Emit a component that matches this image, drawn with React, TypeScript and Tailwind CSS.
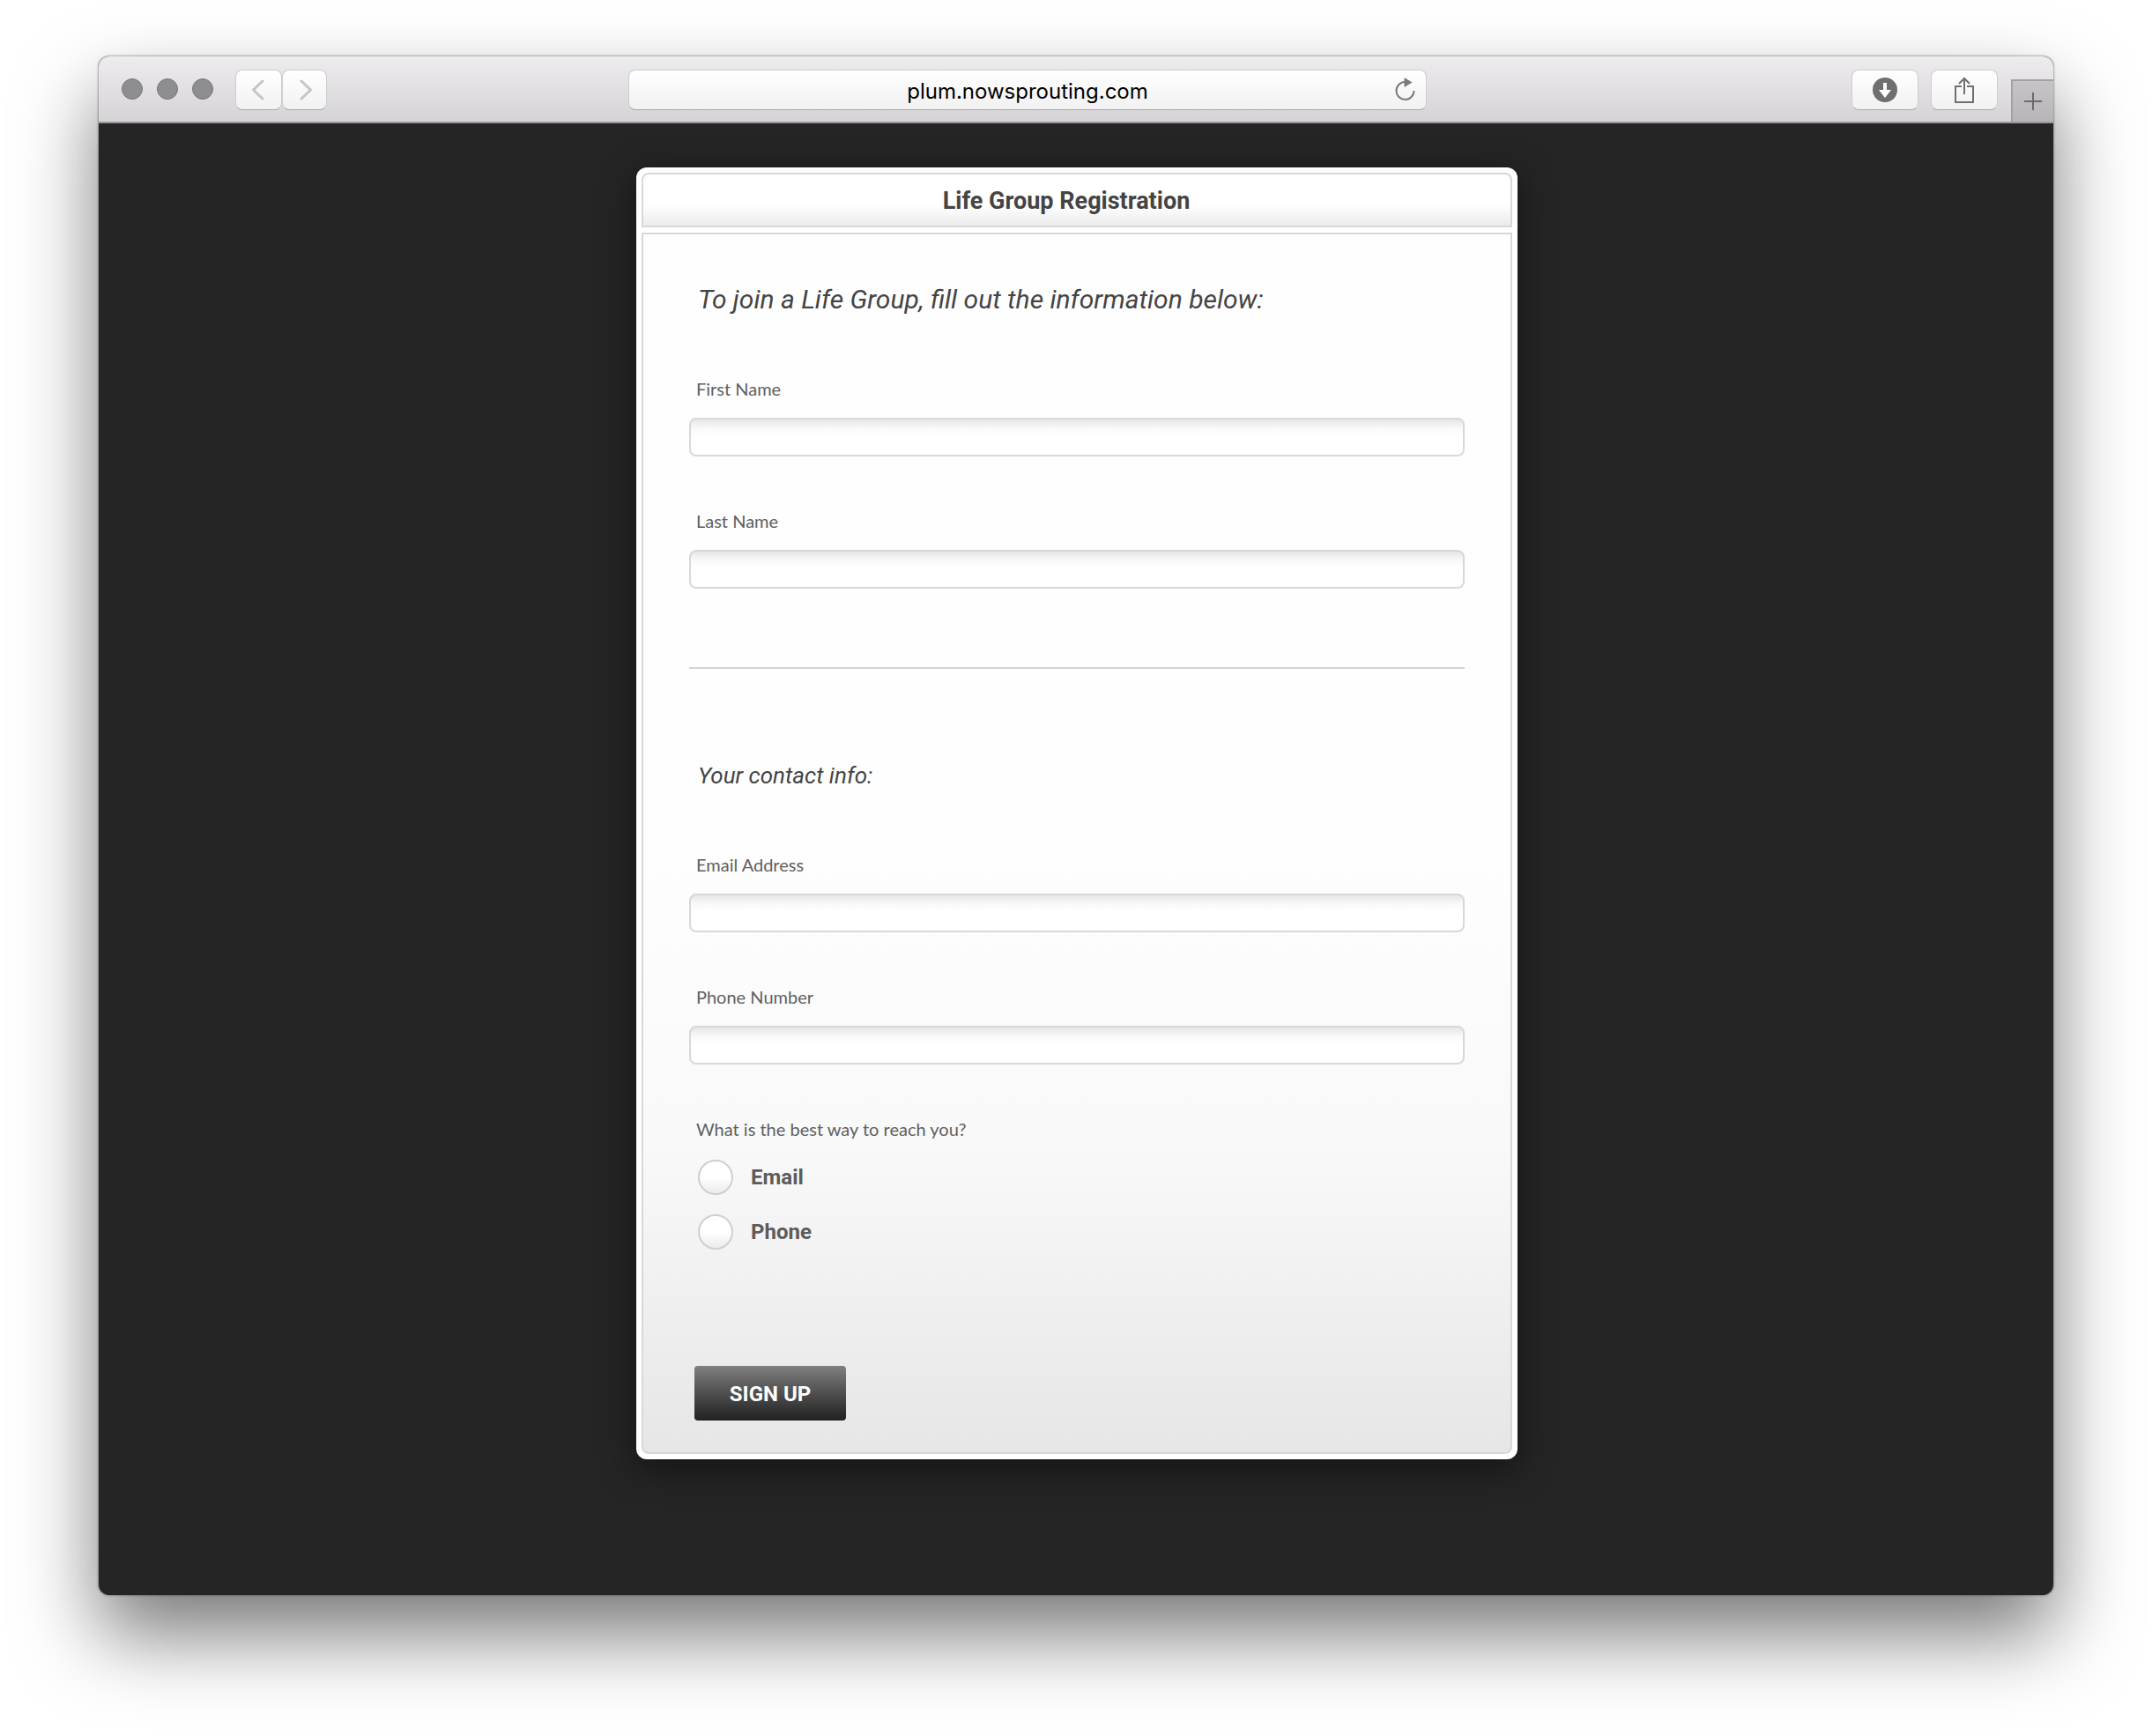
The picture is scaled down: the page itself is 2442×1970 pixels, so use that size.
import React, { useState } from 'react';
import { Plus } from 'lucide-react';

interface TextField {
  id: string;
  label: string;
  type: string;
}

const nameFields: TextField[] = [
  { id: 'first-name', label: 'First Name', type: 'text' },
  { id: 'last-name', label: 'Last Name', type: 'text' },
];

const contactFields: TextField[] = [
  { id: 'email', label: 'Email Address', type: 'email' },
  { id: 'phone', label: 'Phone Number', type: 'tel' },
];

const contactMethods = ['Email', 'Phone'];

const toolbarButton =
  'flex h-[46px] items-center justify-center rounded-lg border border-[#cfcdd0] border-b-[#a9a8aa] bg-gradient-to-b from-white to-[#f1f1f1]';

function Field({ field }: { field: TextField }) {
  return (
    <div className="flex flex-col">
      <label htmlFor={field.id} className="ml-2 h-[50px] font-['Lato',sans-serif] text-[20px] leading-[34px] text-[#606060]">
        {field.label}
      </label>
      <input
        id={field.id}
        type={field.type}
        className="h-[44px] rounded-lg border-2 border-[#d8d8d8] bg-white bg-gradient-to-b from-[#e6e6e6] from-0% via-[#f9f9f9] via-25% to-white to-45% px-3 text-[20px] text-[#444] outline-none"
      />
    </div>
  );
}

function Toolbar() {
  return (
    <header className="grid h-[76px] grid-cols-[601fr_906fr_711fr] border-b-2 border-[#9b999c] bg-gradient-to-b from-[#eeecef] to-[#d5d3d6] pt-[15px]">
      <div className="flex items-start pl-[26px]">
        <div className="flex h-11 items-center gap-4">
          <span className="h-6 w-6 rounded-full border border-[#77757a] bg-[#8e8d91]" />
          <span className="h-6 w-6 rounded-full border border-[#77757a] bg-[#8e8d91]" />
          <span className="h-6 w-6 rounded-full border border-[#77757a] bg-[#8e8d91]" />
        </div>
        <div className="ml-[25px] flex">
          <button type="button" aria-label="Back" className={`${toolbarButton} w-[53px]`}>
            <svg className="h-6 w-4" viewBox="0 0 16 24" fill="none" stroke="#c4c4c4" strokeWidth="3" strokeLinecap="round" strokeLinejoin="round">
              <path d="M12 2 1.500 12 12 22" />
            </svg>
          </button>
          <button type="button" aria-label="Forward" className={`${toolbarButton} w-[51px]`}>
            <svg className="h-6 w-4" viewBox="0 0 16 24" fill="none" stroke="#c4c4c4" strokeWidth="3" strokeLinecap="round" strokeLinejoin="round">
              <path d="m4 2 10.500 10L4 22" />
            </svg>
          </button>
        </div>
      </div>

      <div className={`${toolbarButton} relative`}>
        <input
          type="text"
          aria-label="Address"
          defaultValue="plum.nowsprouting.com"
          className="h-full w-full bg-transparent pt-[2px] text-center font-['Inter',sans-serif] text-[24px] text-black outline-none"
        />
        <button type="button" aria-label="Reload" className="absolute right-3 top-2">
          <svg className="h-7 w-6" viewBox="0 0 24 28" fill="none" stroke="#7a7a7a" strokeWidth="2">
            <path d="M12 5A10 10 0 1 0 22.500 15" />
            <path d="M11.500 0v11l9-5.500z" fill="#7a7a7a" stroke="none" />
          </svg>
        </button>
      </div>

      <div className="flex items-start justify-end">
        <button type="button" aria-label="Downloads" className={`${toolbarButton} w-[76px]`}>
          <svg className="h-7 w-7" viewBox="0 0 28 28">
            <circle cx="14" cy="14" r="14" fill="#6f6f6f" />
            <path d="M12 6h4v8h5l-7 9-7-9h5z" fill="#fff" />
          </svg>
        </button>
        <button type="button" aria-label="Share" className={`${toolbarButton} ml-[14px] w-[76px]`}>
          <svg className="h-8 w-6" viewBox="0 0 24 32" fill="none" stroke="#6f6f6f" strokeWidth="2">
            <path d="M9 12H2v18h20V12h-7" />
            <path d="M12 21V3M6 9l6-6 6 6" />
          </svg>
        </button>
        <button
          type="button"
          aria-label="New tab"
          className="ml-[15px] mt-[11px] flex h-[48px] w-[48px] items-center justify-center border-l-2 border-t-2 border-[#a3a1a4] bg-gradient-to-b from-[#c6c4c7] to-[#b7b5b8]"
        >
          <Plus size={32} strokeWidth={1.5} className="text-[#6b696c]" />
        </button>
      </div>
    </header>
  );
}

export default function App() {
  const [method, setMethod] = useState('');

  return (
    <div className="min-h-screen bg-white px-28 pb-40 pt-16">
      <div className="overflow-hidden rounded-xl bg-[#252525] shadow-[0_0_2px_1px_rgba(0,0,0,0.3),0_45px_90px_rgba(0,0,0,0.53)]">
        <Toolbar />

        <main className="pb-[154px] pl-6 pr-[22px] pt-[50px]">
          <div className="mx-auto flex w-full max-w-[1000px] flex-col gap-[6px] rounded-xl bg-white p-[6px] shadow-[0_10px_40px_rgba(0,0,0,0.5)]">
            <h1 className="h-[62px] rounded-t-lg border-2 border-[#d8d8d8] bg-gradient-to-b from-white from-60% to-[#ebebeb] pr-6 text-center font-['Roboto',sans-serif] text-[27px] font-bold leading-[60px] text-[#444]">
              Life Group Registration
            </h1>

            <form
              onSubmit={(e) => e.preventDefault()}
              className="flex flex-col rounded-b-lg border-2 border-[#d8d8d8] bg-gradient-to-b from-[#fefefe] from-50% via-[#f9f9f9] via-75% to-[#e6e6e6] px-[52px] pb-9 pt-[52px]"
            >
              <p className="ml-[10px] font-['Roboto',sans-serif] text-[30px] italic leading-[44px] text-[#444]">
                To join a Life Group, fill out the information below:
              </p>
              <div className="mt-[62px] flex flex-col gap-14">
                {nameFields.map((field) => (
                  <Field key={field.id} field={field} />
                ))}
              </div>

              <hr className="mt-[89px] border-t-2 border-[#d3d3d3]" />

              <h2 className="ml-[10px] mt-[101px] font-['Roboto',sans-serif] text-[26px] italic leading-[40px] text-[#444]">
                Your contact info:
              </h2>
              <div className="mt-16 flex flex-col gap-14">
                {contactFields.map((field) => (
                  <Field key={field.id} field={field} />
                ))}
              </div>

              <fieldset className="ml-2 mt-14">
                <legend className="h-[52px] font-['Lato',sans-serif] text-[20px] leading-[34px] text-[#606060]">
                  What is the best way to reach you?
                </legend>
                <div className="flex flex-col gap-[22px]">
                  {contactMethods.map((option) => (
                    <label
                      key={option}
                      className="flex h-10 items-center gap-5 font-['Roboto',sans-serif] text-[24px] font-bold text-[#5c5c5c]"
                    >
                      <input
                        type="radio"
                        name="method"
                        checked={method === option}
                        onChange={() => setMethod(option)}
                        className="ml-[2px] h-10 w-10 appearance-none rounded-full border-2 border-[#cfcfcf] bg-gradient-to-b from-white from-50% to-[#ebebeb] checked:border-[#666]"
                      />
                      {option}
                    </label>
                  ))}
                </div>
              </fieldset>

              <button
                type="submit"
                className="ml-[6px] mt-[132px] h-[62px] w-[172px] rounded bg-gradient-to-b from-[#808080] to-[#222] pt-[2px] font-['Roboto',sans-serif] text-[24px] font-bold text-white"
              >
                SIGN UP
              </button>
            </form>
          </div>
        </main>
      </div>
    </div>
  );
}
